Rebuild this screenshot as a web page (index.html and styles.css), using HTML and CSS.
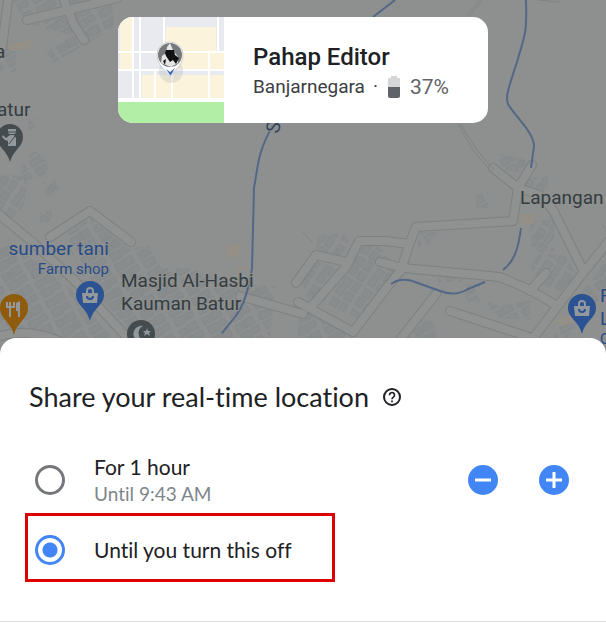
FILE: index.html
```html
<!DOCTYPE html>
<html lang="en">
<head>
  <meta charset="UTF-8">
  <meta name="viewport" content="width=device-width, initial-scale=1">
  <title>Share your real-time location</title>
  <link rel="stylesheet" href="styles.css">
</head>
<body>

<main class="screen">
  <section class="map">
    <svg class="map-canvas" viewBox="0 0 606 356" preserveAspectRatio="xMidYMin slice" role="img" aria-label="Map of Batur">
      <defs>
        <pattern id="houses-a" width="26" height="22" patternUnits="userSpaceOnUse" patternTransform="rotate(-28)">
          <path d="M2 2h8v7H2zM12 1h10v8H12zM3 12h11v8H3zM16 12h7v6h-7z"/>
        </pattern>
        <pattern id="houses-b" width="24" height="23" patternUnits="userSpaceOnUse" patternTransform="rotate(-58)">
          <path d="M2 2h9v7H2zM13 3h8v8h-8zM1 12h8v8H1zM12 14h10v6H12z"/>
        </pattern>
        <g id="roads">
          <path d="M8 0L2 48"/>
          <path d="M63-2L74 25L84 40"/>
          <path d="M27 20L117-2"/>
          <path d="M50 237L90 211L131 242"/>
          <path d="M-4 212L30 240L74 280L134 345"/>
          <path d="M-4 337Q35 325 76 350"/>
          <path d="M532 165L518 188L513 221L416 227L409 245L401 270"/>
          <path d="M493 168L518 188"/>
          <path d="M518 188L540 195L553 210L583 270"/>
          <path d="M409 244L385 241L359 241L346 267L310 308"/>
          <path d="M346 262L316 255L296 283"/>
          <path d="M380 262L403 268L500 277L528 289L556 305"/>
          <path d="M610 240L583 273L528 345"/>
          <path d="M298 302L353 332L388 286L401 270"/>
          <path d="M436 294L396 345"/>
          <path d="M450 311L535 339"/>
          <path d="M530 291L546 273"/>
          <path d="M240 296L275 306L303 314"/>
        </g>
      </defs>

      <rect class="land" width="606" height="356"/>

      <!-- built-up blocks -->
      <path class="blocks" fill="url(#houses-a)" d="M12 0H112L114 27L90 42L54 63L46 53L70 35L28 24z"/>
      <path class="blocks" fill="url(#houses-a)" d="M0 45L16 52V72H0zM28 120L38 116V130H28zM22 165L34 150L48 162L46 178L20 180z"/>
      <path class="blocks" fill="url(#houses-b)" d="M0 172L28 178L24 205L10 222L0 214zM42 182L56 180L60 194L46 196zM40 212L52 210V222H40z"/>
      <path class="blocks" fill="url(#houses-a)" d="M64 236L90 218L128 248L148 246L162 268L192 268L225 284L275 286L270 340H140L84 280z"/>
      <path class="blocks" fill="url(#houses-a)" d="M0 245L20 250L72 290L118 345H28L0 320z"/>
      <path class="blocks" fill="url(#houses-b)" d="M300 280L318 262L342 270L322 300L308 300zM318 236L344 233L350 242L340 256L316 250z"/>
      <path class="blocks" fill="url(#houses-b)" d="M362 246L378 244L400 274L380 290L360 320L322 302L350 268z"/>
      <path class="blocks" fill="url(#houses-a)" d="M300 308L346 330V345H296zM418 232H438L424 250L418 246zM476 190H488V208H476zM438 274H462V282H438z"/>
      <path class="blocks" fill="url(#houses-b)" d="M522 178L548 176V190L526 186zM530 220H554V252H532zM540 252L566 256L578 276L560 292L540 284L530 266z"/>
      <path class="blocks" fill="url(#houses-a)" d="M466 284H480V302H466zM476 296L500 306L530 300V320L500 318zM410 318L436 322V345H400zM586 286L606 262V292L560 345H548zM500 154L532 160L526 174L498 168z"/>
      <path class="sand" d="M7 44L32 40L30 48L10 51zM226 247L241 242L239 256L228 258zM236 268L248 266L246 270L236 271zM519 214H534V224H519zM556 320L570 314L576 322L562 326z"/>

      <use class="road-edge" href="#roads"/>
      <use class="road" href="#roads"/>

      <g class="lane">
        <path d="M459 124Q468 147 490 170M461 124Q471 145 494 170"/>
        <path d="M467 16L479 0M470 16L482 0M538 0L560 2"/>
        <path d="M602 225L606 230M303 232L312 242"/>
      </g>

      <g class="river">
        <path d="M395 0L373 17"/>
        <path d="M526 0C527 35 525 34 517 62C509 87 505 96 508 104C513 114 534 132 534 146L531 168"/>
        <path d="M273 125Q261 146 258 164L254 188L252 268Q247 302 235 317L222 333"/>
        <path d="M521 228C518 252 513 262 503 270"/>
        <path d="M485 282L468 289Q455 297 440 291L418 283Q402 276 391 284"/>
      </g>

      <!-- place labels -->
      <g class="labels">
        <text x="-5" y="58">a</text>
        <text x="-3" y="116">atur</text>
        <text x="520" y="204">Lapangan</text>
        <text x="121" y="287">Masjid Al-Hasbi</text>
        <text x="121" y="310">Kauman Batur</text>
        <text class="river-name" transform="translate(273 127) rotate(-75)" y="7" text-anchor="middle">S</text>
      </g>
      <g class="labels labels-shop">
        <text x="109" y="255" text-anchor="end">sumber tani</text>
        <text class="small" x="109" y="274" text-anchor="end">Farm shop</text>
        <text x="600" y="302">R</text>
        <text x="600" y="325">L</text>
        <text class="small" x="600" y="344">C</text>
      </g>

      <!-- pins -->
      <g class="pin-grey" transform="translate(10 123)">
        <path d="M0 39C-3 27-13 24-13 14A13 13 0 0 1 13 14C13 24 3 27 0 39z"/>
        <path class="glyph" d="M-2 6H6V9L5 11H-1L-2 9zM0 12H4L6 15V23H-2V18L-5 17L-8 14L-7 12L-4 15z"/>
        <path class="glyph-cut" d="M-2 9H6M5 13L-1 21"/>
      </g>
      <g class="pin-blue" transform="translate(90 281)">
        <path d="M0 40C-3 27-14 24-14 14A14 14 0 0 1 14 14C14 24 3 27 0 40z"/>
        <path class="glyph" d="M-8 12H8L7 22H-7z"/>
        <path class="glyph-line" d="M-3 12V10A3 3 0 0 1 3 10V12"/>
        <path class="bag-smile" d="M-3 15A3 3 0 0 0 3 15"/>
      </g>
      <g class="pin-blue" transform="translate(582 294)">
        <path d="M0 40C-3 27-14 24-14 14A14 14 0 0 1 14 14C14 24 3 27 0 40z"/>
        <path class="glyph" d="M-8 12H8L7 22H-7z"/>
        <path class="glyph-line" d="M-3 12V10A3 3 0 0 1 3 10V12"/>
        <path class="bag-smile" d="M-3 15A3 3 0 0 0 3 15"/>
      </g>
      <g class="pin-orange" transform="translate(14 294)">
        <path d="M0 41C-3 28-14 25-14 14A14 14 0 0 1 14 14C14 25 3 28 0 41z"/>
        <path class="glyph-line" d="M-7 8V13H0V8M-4 8V23M5 8V23"/>
        <path class="glyph" d="M2 9L6 7V17H2z"/>
      </g>
      <g class="pin-grey" transform="translate(141 334)">
        <circle r="14"/>
        <path class="glyph" d="M2-8A8 8 0 1 0 4 7A8 8 0 0 1 2-8z"/>
        <path class="glyph" d="M6-6L7-3H10L8-1L9 2L6 0L3 2L4-1L2-3H5z"/>
      </g>
    </svg>

    <article class="person-card">
      <svg class="person-map" viewBox="0 0 106 106" aria-hidden="true">
        <rect width="106" height="106" fill="#e9eaef"/>
        <path fill="#fcf3dc" d="M2 0H15V53H2zM48 10H98V35H48zM24 58H106V82H24zM48 36H106V52H48z"/>
        <path fill="none" stroke="#fff" stroke-width="2" d="M0 35H106M0 53H106M15 0V82M22 0V82M46 0V36M37 53V82M54 53V82M91 35V82M100 0V35"/>
        <path fill="#fff" d="M0 81H106V86H0z"/>
        <path fill="#b2eea5" d="M0 85H106V106H0z"/>
        <circle cx="53" cy="54" r="12" fill="#8a9aa0" opacity=".2"/>
        <path fill="#fff" stroke="#cdd0d2" d="M52 60C50 54 39 50 39 38A13 13 0 0 1 65 38C65 50 54 54 52 60z"/>
        <path fill="#3d6dae" d="M48 52L52 55L57 51L53 58H52z"/>
        <circle cx="52" cy="38" r="12" fill="#77797a"/>
        <path fill="#e5e5e5" d="M49 30L52 26L55 33L60 40L60 46L53 50L43 46L44 39L48 36z"/>
        <path fill="#111" d="M48 33H56L57 38L61 41L58 47L55 43L52 45L48 39L47 36zM45 44L48 42L47 48z"/>
      </svg>
      <div class="person-info">
        <h1 class="person-name">Pahap Editor</h1>
        <p class="person-status">
          <span>Banjarnegara</span>
          <span class="dot">·</span>
          <svg class="battery" viewBox="0 0 12 22" aria-hidden="true">
            <path fill="#d5d6d7" d="M3 0H9V2H12V12H0V2H3z"/>
            <path fill="#5f6368" d="M0 11H12V20Q12 22 10 22H2Q0 22 0 20z"/>
          </svg>
          <span class="percent">37%</span>
        </p>
      </div>
    </article>
  </section>

  <form class="sheet">
    <header class="sheet-header">
      <h2 class="sheet-title">Share your real-time location</h2>
      <button class="help" type="button" aria-label="Help">
        <svg viewBox="0 0 18 18" fill="none" stroke="#202124" aria-hidden="true">
          <circle cx="9" cy="9" r="8" stroke-width="2"/>
          <path stroke-width="1.7" d="M6.5 7.2A2.5 2.5 0 1 1 10.4 9.1Q9 10 9 11.2M9 12.5V14.2"/>
        </svg>
      </button>
    </header>

    <div class="option">
      <input class="radio" type="radio" name="duration" id="one-hour">
      <label class="option-label" for="one-hour">
        For 1 hour
        <small class="option-note">Until 9:43 AM</small>
      </label>
      <div class="stepper">
        <button class="step" type="button" aria-label="Less time">
          <svg viewBox="0 0 30 30" aria-hidden="true"><path d="M7 15H23"/></svg>
        </button>
        <button class="step" type="button" aria-label="More time">
          <svg viewBox="0 0 30 30" aria-hidden="true"><path d="M7 15H23M15 7V23"/></svg>
        </button>
      </div>
    </div>

    <div class="option option-marked">
      <input class="radio" type="radio" name="duration" id="until-off" checked>
      <label class="option-label" for="until-off">Until you turn this off</label>
    </div>

    <hr class="divider">
  </form>
</main>

</body>
</html>
```
FILE: styles.css
```css
* {
  box-sizing: border-box;
}
body {
  margin: 0;
  background: #fff;
  color: #202124;
  font-family: Roboto, "Liberation Sans", sans-serif;
}
h1, h2, p {
  margin: 0;
  font-weight: 400;
}
button {
  padding: 0; border: none;
  background: none; cursor: pointer;
}
svg {
  display: block;
}

/* map */
.map {
  position: relative;
  display: flex; justify-content: center;
  padding: 17px 16px 232px;
  overflow: hidden;
}
.map-canvas {
  position: absolute; top: 0; left: 0;
  width: 100%; height: 100%;
}
.land { fill: #8d908f; }
.blocks { stroke: none; }
pattern path {
  fill: #898c8d; stroke: #818486; stroke-width: 0.7;
}
.sand { fill: #948f87; }
.road-edge, .road {
  fill: none; stroke-linejoin: round; stroke-linecap: round;
}
.road-edge { stroke: #7d8081; stroke-width: 10; }
.road { stroke: #8f9291; stroke-width: 8; }
.lane { fill: none; stroke: #808384; stroke-width: 1; }
.river { fill: none; stroke: #526886; stroke-width: 2; }
.labels {
  fill: #353c40; font-size: 19px;
  stroke: #8d908f; stroke-width: 2; paint-order: stroke;
}
.labels-shop { fill: #274a88; }
.labels .small { font-size: 15px; }
.labels .river-name { fill: #33435c; }
.pin-grey { fill: #454c4f; }
.pin-blue { fill: #2b5293; }
.pin-orange { fill: #8f5b0c; }
.glyph { fill: #92989c; }
.glyph-line { fill: none; stroke: #92989c; stroke-width: 2; }
.glyph-cut { fill: none; stroke: #454c4f; stroke-width: 1; }
.bag-smile { fill: none; stroke: #2b5293; stroke-width: 2; }

.person-card {
  position: relative;
  display: flex; align-items: center;
  width: 370px; max-width: 100%;
  background: #fff; border-radius: 15px;
  overflow: hidden;
}
.person-map {
  width: 106px; height: 106px; flex: none;
}
.person-info {
  padding: 2px 0 0 29px;
}
.person-name {
  font-size: 24px; line-height: 32px; font-weight: 500;
}
.person-status {
  display: flex; align-items: center;
  color: #3c4043;
  font-size: 19px; line-height: 28px;
}
.dot {
  padding: 0 10px 0 8px;
}
.battery {
  width: 12px; height: 22px;
  margin-right: 10px;
}
.percent {
  font-size: 21px; color: #5f6368;
}

/* bottom sheet */
.sheet {
  position: relative;
  margin-top: -17px; padding-top: 39px;
  background: #fff;
  border-radius: 16px 16px 0 0;
  font-family: Lato, "Open Sans", sans-serif;
  font-variant-ligatures: none;
}
.sheet-header {
  display: flex; align-items: center; gap: 14px;
  padding: 0 29px;
}
.sheet-title {
  font-size: 27px; line-height: 40px;
}
.help svg {
  width: 18px; height: 18px;
}
.option {
  display: flex; align-items: center;
  padding: 0 37px 0 35px;
}
.sheet-header + .option {
  margin-top: 36px;
}
.radio {
  appearance: none; flex: none;
  width: 30px; height: 30px; margin: 0 29px 0 0;
  border: 3px solid #75777b; border-radius: 50%;
  background: #fff; cursor: pointer;
}
.radio:checked {
  border-color: #4285f4;
  background: radial-gradient(circle, #4285f4 7px, #fff 8px);
}
.option-label {
  font-size: 21px; line-height: 28px;
  cursor: pointer;
}
.option-note {
  display: block;
  color: #80868b;
  font-size: 19px; line-height: 26px;
}
.stepper {
  display: flex; gap: 41px;
  margin-left: auto;
}
.step {
  width: 30px; height: 30px;
  border-radius: 50%; background: #4285f4;
}
.step path {
  stroke: #fff; stroke-width: 3;
}
.option-marked {
  width: fit-content; min-height: 69px;
  margin: 6px 25px 0; padding: 5px 40px 0 7px;
  border: 3px solid #dc0000;
}
.divider {
  margin: 39px 0 0;
  border: none; border-top: 1px solid #dadce0;
}
```
